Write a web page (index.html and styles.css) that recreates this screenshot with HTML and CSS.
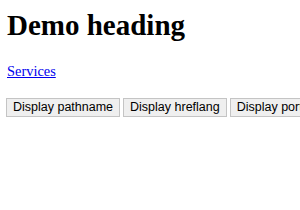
FILE: index.html
```html
<!DOCTYPE html>
<html>
<head>
<link rel="stylesheet" href="styles.css">
</head>
<body class="page">
<h1 class="title">Demo heading</h1>
<p class="para"><a class="link" href="#">Services</a></p>
<div class="buttons">
<button class="btn">Display pathname</button>
<button class="btn">Display hreflang</button>
<button class="btn">Display port</button>
</div>
</body>
</html>
```
FILE: styles.css
```css
html { background: #fff; }
.page { margin: 0; padding: 0 0 0 6px; font-family: "Liberation Serif", "Times New Roman", serif; font-size: 14.4px; overflow: hidden; width: 294px; height: 210px; }
.title { font-size: 29px; line-height: 32px; font-weight: bold; margin: 9px 0 22px 1px; color: #000; }
.para { margin: 0 0 19px 1px; line-height: 16px; }
.link { color: #0000ee; text-decoration: underline; }
.buttons { display: flex; gap: 3px; }
.btn { flex-shrink: 0; font-family: "Liberation Sans", Arial, sans-serif; font-size: 12.5px; height: 19px; line-height: 15px; background: #efefef; border: 1px solid #c4c4c4; border-radius: 0; padding: 1px 6px; color: #000; margin: 0; }
```
